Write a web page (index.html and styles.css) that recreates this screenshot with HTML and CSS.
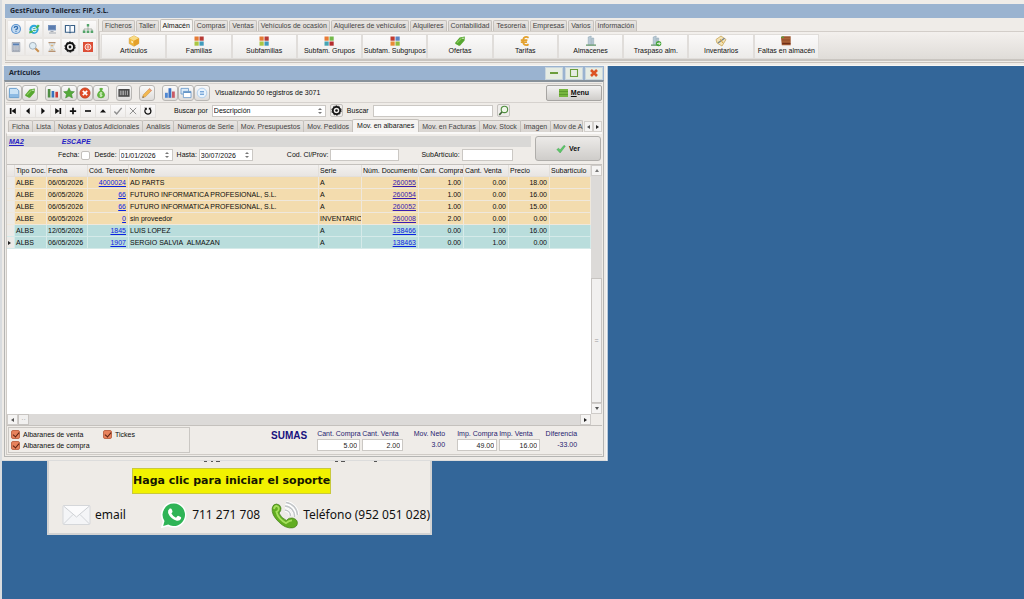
FILE: index.html
```html
<!DOCTYPE html>
<html lang="es">
<head>
<meta charset="utf-8">
<title>GestFuturo Talleres: FIP, S.L.</title>
<link rel="stylesheet" href="styles.css">
</head>
<body>
<svg class="sprite" aria-hidden="true">
  <symbol id="i-help" viewBox="0 0 12 12"><circle cx="6" cy="6" r="5" fill="#5b93cf"/><circle cx="6" cy="6" r="3.9" fill="#c3daf0"/><path d="M4.4 5Q4.4 3.4 6 3.4T7.6 4.9Q7.6 5.7 6 6.6V7.2M6 8.2V9" stroke="#3470b4" stroke-width="1.3" fill="none"/></symbol>
  <symbol id="i-globe" viewBox="0 0 12 12"><circle cx="6" cy="6.3" r="4.6" fill="#2fa8dc"/><path d="M1.2 9.5Q6 9 10.8 2.2" stroke="#49b655" stroke-width="2.2" fill="none"/><path d="M4 6.4H8.6M8.3 8Q6 10 4.3 7.5T6 4.2Q8 4.2 8.3 6" stroke="#e8f6fb" stroke-width="1" fill="none"/></symbol>
  <symbol id="i-pc" viewBox="0 0 12 12"><path d="M2 2H10V7.4H2Z" fill="#7592bd"/><path d="M3 3H9V6.2H3Z" fill="#5c7db0"/><path d="M4.5 8H7.5V9H4.5ZM3 9.5H10V10.5H3Z" fill="#a4a9b2"/></symbol>
  <symbol id="i-book" viewBox="0 0 12 12"><path d="M1.4 2.5H5Q6 2.6 6 3.6Q6 2.6 7 2.5H10.6V9.3H7Q6 9.3 6 10.2Q6 9.3 5 9.3H1.4Z" fill="#f8fbff" stroke="#385f86" stroke-width="1.1"/><path d="M6 3.5V10" stroke="#385f86"/></symbol>
  <symbol id="i-tree" viewBox="0 0 12 12"><path d="M6 3V7M2 8V6H10V8" stroke="#8d9a8d" stroke-width=".7" fill="none"/><path d="M4.8 1H7.2V3.4H4.8ZM.8 7.6H3.4V10H.8ZM4.7 7.6H7.3V10H4.7ZM8.6 7.6H11.2V10H8.6Z" fill="#53a469"/></symbol>
  <symbol id="i-calc" viewBox="0 0 12 12"><path d="M2.2 1.5H9.8V10.6H2.2Z" fill="#cfd4dc" stroke="#8e95a3" stroke-width=".7"/><path d="M3 2.4H9V4.4H3Z" fill="#5980b5"/><path d="M3.2 6H9M3.2 8H9M3.2 9.6H9" stroke="#8790a0" stroke-width=".9" stroke-dasharray="1.4 .7"/></symbol>
  <symbol id="i-zoom" viewBox="0 0 12 12"><path d="M7 7L10.8 10.8" stroke="#c98f4e" stroke-width="2"/><circle cx="4.8" cy="4.8" r="3.4" fill="#ddebf3" stroke="#a3b0bb" stroke-width="1"/></symbol>
  <symbol id="i-sand" viewBox="0 0 12 12"><path d="M2.5 1H9.5V2.2H2.5ZM2.5 9.8H9.5V11H2.5Z" fill="#b98e68"/><path d="M3.3 2.2H8.7Q8.4 4.6 6.6 6Q8.4 7.4 8.7 9.8H3.3Q3.6 7.4 5.4 6Q3.6 4.6 3.3 2.2Z" fill="#e5edf1" stroke="#a9b0b5" stroke-width=".5"/><path d="M4.2 3.8H7.8L6 5.7ZM4 9.6L6 7.4L8 9.6Z" fill="#dbae72"/></symbol>
  <symbol id="i-gear" viewBox="0 0 12 12"><circle cx="6" cy="6" r="4" fill="none" stroke="#111" stroke-width="1.9"/><circle cx="6" cy="6" r="5.1" fill="none" stroke="#111" stroke-width="1" stroke-dasharray="1.8 1.4"/><circle cx="6" cy="6" r="1.4" fill="#111"/></symbol>
  <symbol id="i-power" viewBox="0 0 12 12"><path d="M1 1H11V11H1Z" fill="#dd4e36"/><circle cx="6" cy="6" r="3" fill="#e9705a" stroke="#fff" stroke-width=".8"/><path d="M6 4.5V7.5" stroke="#fff" stroke-width=".9"/></symbol>
  <symbol id="i-box" viewBox="0 0 12 12"><path d="M6 .8L10.8 3.2V8.6L6 11.3L1.2 8.6V3.2Z" fill="#efb73c" stroke="#c8922b" stroke-width=".5"/><path d="M6 .8L10.8 3.2L6 5.8L1.2 3.2Z" fill="#f8db86"/><path d="M6 5.8V11.3L10.8 8.6V3.2Z" fill="#e4a02b"/><path d="M3.3 5.5L5 6.4V8.3L3.3 7.4Z" fill="#fff3ca"/></symbol>
  <symbol id="i-tiles" viewBox="0 0 12 12"><path d="M1.5 1.5H5.7V5.7H1.5Z" fill="#e57b35"/><path d="M6.5 1.5H10.7V5.7H6.5Z" fill="#b73a35"/><path d="M1.5 6.5H5.7V10.7H1.5Z" fill="#a9c643"/><path d="M6.5 6.5H10.7V10.7H6.5Z" fill="#409bbd"/></symbol>
  <symbol id="i-tiles2" viewBox="0 0 12 12"><path d="M1.5 1.5H5.7V5.7H1.5Z" fill="#e87b35"/><path d="M6.5 1.5H10.7V5.7H6.5Z" fill="#75b94a"/><path d="M1.5 6.5H5.7V10.7H1.5Z" fill="#45a4b3"/><path d="M6.5 6.5H10.7V10.7H6.5Z" fill="#b52d2d"/></symbol>
  <symbol id="i-tiles3" viewBox="0 0 12 12"><path d="M1.5 1.5H5.7V5.7H1.5Z" fill="#c13a30"/><path d="M6.5 1.5H10.7V5.7H6.5Z" fill="#5e86c4"/><path d="M1.5 6.5H5.7V10.7H1.5Z" fill="#e98a36"/><path d="M6.5 6.5H10.7V10.7H6.5Z" fill="#8fbb3f"/></symbol>
  <symbol id="i-leaf" viewBox="0 0 12 12"><path d="M1.2 7.8L5.6 2.6L10.8 1.4L10.6 5.4L6.2 10.4Q5.2 11.2 4 10.2L1.6 8.9Q.8 8.4 1.2 7.8Z" fill="#57a730"/><path d="M3 7.8L7.6 3.2" stroke="#8bcb5e" stroke-width="1.2"/><circle cx="9" cy="3.2" r=".8" fill="#eef8e8"/></symbol>
  <symbol id="i-euro" viewBox="0 0 12 12"><path d="M9.6 2.8Q7 .9 4.8 3Q3.2 6 4.8 9Q7 11.2 9.6 9.2M1.8 5.1H8.4M1.8 7.2H8" stroke="#e3a12f" stroke-width="1.8" fill="none"/></symbol>
  <symbol id="i-wh" viewBox="0 0 12 12"><path d="M3.2 10V2L6.2 1V10ZM6.8 10V3H8.7V10Z" fill="#b9cad6" stroke="#8ba0ae" stroke-width=".5"/><path d="M1 9.4H11V10.9H1Z" fill="#78a47e"/></symbol>
  <symbol id="i-whgo" viewBox="0 0 12 12"><path d="M3.2 10V2L6.2 1V10ZM6.8 10V3H8.7V10Z" fill="#b9cad6" stroke="#8ba0ae" stroke-width=".5"/><path d="M1 9.4H8V10.9H1Z" fill="#78a47e"/><circle cx="8.6" cy="8.6" r="2.7" fill="#46a53a"/><path d="M7 8.6H10M8.8 7.2L10.2 8.6L8.8 10" stroke="#fff" stroke-width=".8" fill="none"/></symbol>
  <symbol id="i-inv" viewBox="0 0 12 12"><path d="M1 4.5L6 1L11 4.5L7 11L2 8Z" fill="#f3e3b5" stroke="#c7a55a" stroke-width=".8"/><path d="M3 8L9.5 3.2" stroke="#77828d" stroke-width="1.3"/><path d="M5 4L8 8" stroke="#dda73d"/></symbol>
  <symbol id="i-crate" viewBox="0 0 12 12"><path d="M1 2.2L2.4 1.2H10.7V10.2H1.8Z" fill="#9d5630"/><path d="M2 3H10V4H2ZM2.4 6.2H10V7H2.4Z" fill="#ab6439"/><path d="M1 2.2H4" stroke="#58a23c" stroke-width="1.2"/><path d="M2.2 8.5H10.4" stroke="#702e18"/></symbol>
  <symbol id="i-page" viewBox="0 0 12 12"><path d="M1.4 1.4H8.5L10.8 3.6V10.6H1.4Z" fill="#c9e2f5" stroke="#6b9fcd" stroke-width="1"/><path d="M2 7H10V10H2Z" fill="#8dbbe4"/></symbol>
  <symbol id="i-bars" viewBox="0 0 12 12"><path d="M.8 2H3.4V10.5H.8Z" fill="#4f8e43"/><path d="M4.6 4H7.2V10.5H4.6Z" fill="#3973bd"/><path d="M8.4 4.8H11V10.5H8.4Z" fill="#cc3c37"/></symbol>
  <symbol id="i-star" viewBox="0 0 12 12"><path d="M6 .8L7.6 4.3L11.4 4.7L8.6 7.2L9.4 11L6 9.1L2.6 11L3.4 7.2L.6 4.7L4.4 4.3Z" fill="#55aa3a" stroke="#39842b" stroke-width=".5"/></symbol>
  <symbol id="i-x" viewBox="0 0 12 12"><circle cx="6" cy="6" r="5.2" fill="#df4b26" stroke="#a83c22" stroke-width=".5"/><path d="M3.8 3.8L8.2 8.2M8.2 3.8L3.8 8.2" stroke="#fff" stroke-width="1.7"/></symbol>
  <symbol id="i-bag" viewBox="0 0 12 12"><path d="M5 3.5L4.3 1.5L6 .7L8.2 1.6L7 3.5Q10.6 6 9.8 9Q8.8 11.4 6 11.3Q3 11.3 2.2 9Q1.6 6 5 3.5Z" fill="#62b342"/><path d="M6 5V10M7.3 6Q4.7 5.3 4.8 6.8T7.2 8.2Q7 9.6 4.7 9" stroke="#e8f7db" stroke-width=".8" fill="none"/></symbol>
  <symbol id="i-barcode" viewBox="0 0 12 12"><path d="M.4 2H11.6V9.8H.4Z" fill="#4a4a4a"/><path d="M2.3 3.6V8.2M4 3.6V8.2M5.4 3.6V8.2M7.3 3.6V8.2M9.4 3.6V8.2" stroke="#d8d8d8" stroke-width=".7"/></symbol>
  <symbol id="i-pencil" viewBox="0 0 12 12"><path d="M1.5 10.7L2.3 7.8L8.5 1.4L10.7 3.4L4.4 9.8Z" fill="#f2b850" stroke="#c28a3a" stroke-width=".5"/><path d="M7.6 2.3L8.5 1.4L10.7 3.4L9.8 4.4Z" fill="#e79084"/><path d="M1.5 10.7L1.9 9.2L3 10.2Z" fill="#444"/></symbol>
  <symbol id="i-chart" viewBox="0 0 12 12"><path d="M1 5.8H3.8V10.8H1Z" fill="#4e87d2"/><path d="M4.5 1.2H7.3V10.8H4.5Z" fill="#3e74c4"/><path d="M8 4.5H10.8V10.8H8Z" fill="#c95b66"/></symbol>
  <symbol id="i-wins" viewBox="0 0 12 12"><path d="M1 1.4H8.5V7H1Z" fill="#dcebf8" stroke="#6596c8" stroke-width=".8"/><path d="M3.4 4.4H11V10.6H3.4Z" fill="#fff" stroke="#6596c8" stroke-width=".8"/><path d="M3.4 4.4H11V6H3.4Z" fill="#6596c8"/></symbol>
  <symbol id="i-doc" viewBox="0 0 12 12"><circle cx="6" cy="6" r="4.8" fill="#e8f3fd" stroke="#a6c8e9" stroke-width=".8"/><path d="M4 4.8H8M4 7.2H8" stroke="#4a88ca" stroke-width="1"/></symbol>
  <symbol id="i-find" viewBox="0 0 12 12"><path d="M4.6 7.4L1.4 10.8" stroke="#3c5f35" stroke-width="1.7"/><circle cx="7" cy="4.8" r="3.5" fill="#eff6e9" stroke="#4f8d3e" stroke-width="1.2"/></symbol>
  <symbol id="n-first" viewBox="0 0 12 12"><path d="M2.2 2.4V9.6H4.2V2.4ZM9.4 2.4V9.6L4.3 6Z" fill="#111"/></symbol>
  <symbol id="n-prev" viewBox="0 0 12 12"><path d="M8 2.2V9.8L3.6 6Z" fill="#111"/></symbol>
  <symbol id="n-next" viewBox="0 0 12 12"><path d="M4 2.2V9.8L8.4 6Z" fill="#111"/></symbol>
  <symbol id="n-last" viewBox="0 0 12 12"><path d="M9.8 2.4V9.6H7.8V2.4ZM2.6 2.4V9.6L7.7 6Z" fill="#111"/></symbol>
  <symbol id="n-plus" viewBox="0 0 12 12"><path d="M6 2.2V9.8M2.2 6H9.8" stroke="#111" stroke-width="2.1"/></symbol>
  <symbol id="n-minus" viewBox="0 0 12 12"><path d="M2.4 6H9.6" stroke="#111" stroke-width="2"/></symbol>
  <symbol id="n-up" viewBox="0 0 12 12"><path d="M2.4 7.8H9.6L6 4Z" fill="#111"/></symbol>
  <symbol id="n-ok" viewBox="0 0 12 12"><path d="M1.6 6.6L4.4 9.4L10.4 2.2" stroke="#8f8f8f" stroke-width="1.7" fill="none"/></symbol>
  <symbol id="n-no" viewBox="0 0 12 12"><path d="M2.2 2.2L9.8 9.8M9.8 2.2L2.2 9.8" stroke="#8f8f8f" stroke-width="1.2"/></symbol>
  <symbol id="n-re" viewBox="0 0 12 12"><path d="M3.4 3Q1 6 3.4 8.8Q6 10.8 8.6 8.8Q10.8 6 8 3" stroke="#111" stroke-width="1.4" fill="none"/><path d="M1.4 2H4.6V5Z M10.2 2H7V4.6Z" fill="#111"/></symbol>
  <symbol id="i-check" viewBox="0 0 12 12"><path d="M1 6.6L3.2 5L4.8 7.2L9.6 1.6L11.2 2.6L5 10.8Z" fill="#5dc768" stroke="#379c48" stroke-width=".5"/></symbol>
</svg>

<header class="app">
  <h1 class="app-title">GestFuturo Talleres: FIP, S.L.</h1>
  <div class="ribbon">
    <div class="quick">
      <button aria-label="Ayuda"><svg><use href="#i-help"/></svg></button>
      <button aria-label="Web"><svg><use href="#i-globe"/></svg></button>
      <button aria-label="Equipo"><svg><use href="#i-pc"/></svg></button>
      <button aria-label="Manual"><svg><use href="#i-book"/></svg></button>
      <button aria-label="Esquema"><svg><use href="#i-tree"/></svg></button>
      <button aria-label="Calculadora"><svg><use href="#i-calc"/></svg></button>
      <button aria-label="Buscar"><svg><use href="#i-zoom"/></svg></button>
      <button aria-label="Espera"><svg><use href="#i-sand"/></svg></button>
      <button aria-label="Configuración"><svg><use href="#i-gear"/></svg></button>
      <button aria-label="Salir"><svg><use href="#i-power"/></svg></button>
    </div>
    <div class="ribbon-main">
      <nav class="tabs app-tabs">
        <button>Ficheros</button><button>Taller</button><button class="on">Almacén</button><button>Compras</button><button>Ventas</button><button>Vehículos de ocasión</button><button>Alquileres de vehículos</button><button>Alquileres</button><button>Contabilidad</button><button>Tesorería</button><button>Empresas</button><button>Varios</button><button>Información</button>
      </nav>
      <div class="ribbon-body">
        <div class="tools">
          <button><svg><use href="#i-box"/></svg>Artículos</button>
          <button><svg><use href="#i-tiles"/></svg>Familias</button>
          <button><svg><use href="#i-tiles"/></svg>Subfamilias</button>
          <button><svg><use href="#i-tiles2"/></svg>Subfam. Grupos</button>
          <button><svg><use href="#i-tiles3"/></svg>Subfam. Subgrupos</button>
          <button><svg><use href="#i-leaf"/></svg>Ofertas</button>
          <button><svg><use href="#i-euro"/></svg>Tarifas</button>
          <button><svg><use href="#i-wh"/></svg>Almacenes</button>
          <button><svg><use href="#i-whgo"/></svg>Traspaso alm.</button>
          <button><svg><use href="#i-inv"/></svg>Inventarios</button>
          <button><svg><use href="#i-crate"/></svg>Faltas en almacén</button>
        </div>
      </div>
    </div>
  </div>
</header>

<main class="desktop">
  <section class="support">
    <svg class="rule" viewBox="0 0 180 2"><path d="M0 1.5H3M7 1.5H9M12 1.5H16M131 1.5H134M137 1.5H141M170 1.5H173" stroke="#555"/></svg>
    <button class="start">Haga clic para iniciar el soporte</button>
    <div class="contacts">
      <a class="mail" href="#email"><svg class="ico-mail" viewBox="0 0 28 20"><rect x=".5" y=".5" width="27" height="19" rx="1" fill="#f4f5f7" stroke="#d5d7da"/><path d="M1 19L10.5 9.5M27 19L17.5 9.5" stroke="#d2d5d9" fill="none"/><path d="M1 1L14 12L27 1" fill="#fbfbfc" stroke="#cdd0d4"/></svg>email</a>
      <a class="wa" href="#whatsapp"><svg class="ico-wa" viewBox="0 0 28 28"><path d="M14 1A12.8 12.8 0 1 1 8 25.3L.8 27.3L2.8 20.4A12.8 12.8 0 0 1 14 1Z" fill="#fff"/><path d="M14 2.6A11.2 11.2 0 1 1 8.2 23.5L3.2 24.9L4.5 20A11.2 11.2 0 0 1 14 2.6Z" fill="#2fb456"/><path d="M9.8 7.6Q11.2 7 11.7 8.3L12.5 10.3Q12.8 11 11.4 12.4Q13.2 15.6 16 16.7L17.5 15Q18 14.6 18.6 14.9L20.8 16Q21.4 16.4 21 17.7Q19.8 20.3 16.7 19.7Q10.4 17.8 8.1 12Q7.4 9.2 9.8 7.6Z" fill="#fff"/></svg>711 271 708</a>
      <a class="tel" href="#telefono"><svg class="ico-tel" viewBox="0 0 28 28"><path d="M14 9A6 6 0 0 1 19.5 15M14 5A10 10 0 0 1 23.5 16M15 1.5A13 13 0 0 1 26.5 14" fill="none" stroke="#fff" stroke-width="3.4"/><path d="M14 9A6 6 0 0 1 19.5 15M14 5A10 10 0 0 1 23.5 16M15 1.5A13 13 0 0 1 26.5 14" fill="none" stroke="#c3c6c8" stroke-width="1.6"/><path d="M1.2 7Q2 3 5.5 3Q9.4 3.4 10 7Q10.2 10.4 8 12Q10 17 15.4 19.4Q17.6 16.4 21.4 17Q26 18 26.4 21.6Q26.4 25.8 22 26.8Q14.6 28 7.6 20.8Q.3 14 1.2 7Z" fill="#62ad21" stroke="#417d14" stroke-width=".7"/><path d="M3 8Q3.6 5 5.6 5Q7.8 5.6 7.8 8Q7.6 10 5.4 10.8Q7.2 18 15 22.2Q18 19.4 21 19.4" fill="none" stroke="#a6df5d" stroke-width="1.8"/></svg>Teléfono (952 051 028)</a>
    </div>
  </section>

  <section class="win">
    <div class="win-title"><h2>Artículos</h2>
      <button aria-label="Minimizar"><svg viewBox="0 0 12 10"><path d="M2 5H10" stroke="#6b9d3c" stroke-width="2"/></svg></button>
      <button aria-label="Maximizar"><svg viewBox="0 0 12 10"><path d="M2.5 1.5H9.5V8.5H2.5Z" fill="none" stroke="#6b9d3c" stroke-width="1.1"/></svg></button>
      <button aria-label="Cerrar"><svg viewBox="0 0 12 10"><path d="M3 2L9 8M9 2L3 8" stroke="#dc5424" stroke-width="2.6"/></svg></button>
    </div>
    <div class="win-body">
      <div class="bar">
        <div class="grp"><button aria-label="Ficha nueva"><svg><use href="#i-page"/></svg></button><button aria-label="Etiqueta"><svg><use href="#i-leaf"/></svg></button></div>
        <div class="grp"><button aria-label="Estadística"><svg><use href="#i-bars"/></svg></button><button aria-label="Favorito"><svg><use href="#i-star"/></svg></button><button aria-label="Anular"><svg><use href="#i-x"/></svg></button><button aria-label="Precios"><svg><use href="#i-bag"/></svg></button></div>
        <div class="grp"><button aria-label="Código de barras"><svg><use href="#i-barcode"/></svg></button></div>
        <div class="grp"><button aria-label="Editar"><svg><use href="#i-pencil"/></svg></button></div>
        <div class="grp"><button aria-label="Gráfico"><svg><use href="#i-chart"/></svg></button><button aria-label="Ventanas"><svg><use href="#i-wins"/></svg></button><button aria-label="Notas"><svg><use href="#i-doc"/></svg></button></div>
        <span class="status">Visualizando 50 registros de 3071</span>
        <button class="menu"><i></i><span><u>M</u>enu</span></button>
      </div>
      <div class="nav">
        <div class="steps">
          <button aria-label="Primero"><svg><use href="#n-first"/></svg></button><button aria-label="Anterior"><svg><use href="#n-prev"/></svg></button><button aria-label="Siguiente"><svg><use href="#n-next"/></svg></button><button aria-label="Último"><svg><use href="#n-last"/></svg></button><button aria-label="Añadir"><svg><use href="#n-plus"/></svg></button><button aria-label="Quitar"><svg><use href="#n-minus"/></svg></button><button aria-label="Modificar"><svg><use href="#n-up"/></svg></button><button aria-label="Aceptar"><svg><use href="#n-ok"/></svg></button><button aria-label="Cancelar"><svg><use href="#n-no"/></svg></button><button aria-label="Refrescar"><svg><use href="#n-re"/></svg></button>
        </div>
        <label for="by">Buscar por</label>
        <span class="spin combo"><select id="by"><option>Descripción</option></select></span>
        <button class="sq" aria-label="Opciones"><svg><use href="#i-gear"/></svg></button>
        <label for="q">Buscar</label>
        <input id="q" class="query" type="text">
        <button class="sq" aria-label="Buscar artículo"><svg><use href="#i-find"/></svg></button>
      </div>
      <div class="tabrow">
        <nav class="tabs">
          <button>Ficha</button><button>Lista</button><button>Notas y Datos Adicionales</button><button>Análisis</button><button>Números de Serie</button><button>Mov. Presupuestos</button><button>Mov. Pedidos</button><button class="on">Mov. en albaranes</button><button>Mov. en Facturas</button><button>Mov. Stock</button><button>Imagen</button><button class="last">Mov de A</button>
        </nav>
        <button class="arrow" aria-label="Pestañas anteriores"><i class="tri left"></i></button><button class="arrow" aria-label="Pestañas siguientes"><i class="tri right"></i></button>
      </div>
      <div class="panel">
        <div class="filter">
          <div class="filter-main">
            <div class="article"><a href="#ma2">MA2</a><strong>ESCAPE</strong></div>
            <div class="fields">
              <label for="fe">Fecha:</label><input id="fe" class="tick blank" type="checkbox">
              <label for="de">Desde:</label><span class="spin date"><input id="de" type="text" value="01/01/2026"></span>
              <label class="until" for="ha">Hasta:</label><span class="spin date"><input id="ha" type="text" value="30/07/2026"></span>
              <label class="far" for="cp">Cod. Cl/Prov:</label><input id="cp" class="prov" type="text">
              <label class="sub" for="sa">SubArtículo:</label><input id="sa" class="subart" type="text">
            </div>
          </div>
          <button class="ver"><svg><use href="#i-check"/></svg>Ver</button>
        </div>
        <div class="grid">
          <div class="sheet">
            <table>
              <colgroup><col class="c-ind"><col class="c-tipo"><col class="c-fecha"><col class="c-cod"><col><col class="c-serie"><col class="c-doc"><col class="c-cant"><col class="c-cant"><col class="c-pre"><col class="c-pre"></colgroup>
              <thead><tr><th></th><th>Tipo Doc.</th><th>Fecha</th><th>Cód. Tercero</th><th>Nombre</th><th>Serie</th><th>Núm. Documento</th><th>Cant. Compra</th><th>Cant. Venta</th><th>Precio</th><th>Subartículo</th></tr></thead>
              <tbody>
                <tr class="buy"><td></td><td>ALBE</td><td>06/05/2026</td><td class="n"><a href="#t">4000024</a></td><td>AD PARTS</td><td>A</td><td class="n v"><a href="#d">260055</a></td><td class="n">1.00</td><td class="n">0.00</td><td class="n">18.00</td><td></td></tr>
                <tr class="buy"><td></td><td>ALBE</td><td>06/05/2026</td><td class="n"><a href="#t">66</a></td><td>FUTURO INFORMATICA PROFESIONAL, S.L.</td><td>A</td><td class="n v"><a href="#d">260054</a></td><td class="n">1.00</td><td class="n">0.00</td><td class="n">16.00</td><td></td></tr>
                <tr class="buy"><td></td><td>ALBE</td><td>06/05/2026</td><td class="n"><a href="#t">66</a></td><td>FUTURO INFORMATICA PROFESIONAL, S.L.</td><td>A</td><td class="n v"><a href="#d">260052</a></td><td class="n">1.00</td><td class="n">0.00</td><td class="n">15.00</td><td></td></tr>
                <tr class="buy"><td></td><td>ALBE</td><td>06/05/2026</td><td class="n"><a href="#t">0</a></td><td>sin proveedor</td><td>INVENTARIO</td><td class="n v"><a href="#d">260008</a></td><td class="n">2.00</td><td class="n">0.00</td><td class="n">0.00</td><td></td></tr>
                <tr class="sell"><td></td><td>ALBS</td><td>12/05/2026</td><td class="n"><a href="#t">1845</a></td><td>LUIS LOPEZ</td><td>A</td><td class="n"><a href="#d">138466</a></td><td class="n">0.00</td><td class="n">1.00</td><td class="n">16.00</td><td></td></tr>
                <tr class="sell"><td><i class="tri right"></i></td><td>ALBS</td><td>06/05/2026</td><td class="n"><a href="#t">1907</a></td><td>SERGIO SALVIA&nbsp; ALMAZAN</td><td>A</td><td class="n"><a href="#d">138463</a></td><td class="n">0.00</td><td class="n">1.00</td><td class="n">0.00</td><td></td></tr>
              </tbody>
            </table>
          </div>
          <div class="vbar"><button aria-label="Subir"><i class="tri up"></i></button><span class="gap"></span><span class="thumb">=</span><button aria-label="Bajar"><i class="tri down"></i></button></div>
          <div class="hbar"><button aria-label="Izquierda"><i class="tri left"></i></button><span class="thumb">··</span><span class="gap"></span><button aria-label="Derecha"><i class="tri right"></i></button></div>
        </div>
        <div class="foot">
          <div class="opts">
            <label><input class="tick" type="checkbox" checked>Albaranes de venta</label>
            <label><input class="tick" type="checkbox" checked>Tickes</label>
            <label><input class="tick" type="checkbox" checked>Albaranes de compra</label>
          </div>
          <strong class="sumas">SUMAS</strong>
          <div class="sums">
            <label>Cant. Compra<input type="text" value="5.00"></label>
            <label>Cant. Venta<input type="text" value="2.00"></label>
            <div class="net">Mov. Neto<output>3.00</output></div>
            <label>Imp. Compra<input type="text" value="49.00"></label>
            <label>Imp. Venta<input type="text" value="16.00"></label>
            <div>Diferencia<output>-33.00</output></div>
          </div>
        </div>
      </div>
    </div>
  </section>
</main>
</body>
</html>
```
FILE: styles.css
```css
* { box-sizing: border-box; }
html { height: 100%; }
body {
  margin: 0;
  min-height: 100%;
  display: flex;
  flex-direction: column;
  overflow: hidden;
  border-left: 2px solid #d9dcdf;
  background: #336699;
  color: #0c0c0c;
  font: 7px/10px "Liberation Sans", Arial, sans-serif;
}
button, input, select { font: inherit; color: inherit; margin: 0; padding: 0; }
button { display: flex; align-items: center; justify-content: center; border: 0; background: none; white-space: nowrap; }
h1, h2 { margin: 0; font: bold 7px/14px "Open Sans", "Noto Sans", sans-serif; color: #1b2430; }
label { white-space: nowrap; }
svg { width: 12px; height: 12px; flex: none; display: block; }
.sprite { position: absolute; width: 0; height: 0; }
input[type="text"], select {
  height: 12px;
  border: 1px solid #cbc8c4;
  background: #fff;
  appearance: none;
  border-radius: 0;
  padding: 0 2px;
  min-width: 0;
}

.tri { display: block; width: 0; height: 0; border: 2px solid transparent; }
.tri.left { border-right: 3px solid #555; border-left: 0; }
.tri.right { border-left: 3px solid #222; border-right: 0; }
.tri.up { border-bottom: 3px solid #777; border-top: 0; }
.tri.down { border-top: 3px solid #555; border-bottom: 0; }

/* Main bar */
.app { height: 66px; padding: 4px 0 0 3px; background: #efece8; display: flex; flex-direction: column; border-bottom: 1px solid #f7f6f4; }
.app-title { height: 14px; padding-left: 5px; background: #9ab3d0; }
.ribbon { flex: 1; display: flex; padding-top: 1px; margin-bottom: 2px; border-bottom: 1px solid #c9c3bd; }
.quick { display: grid; grid-template-columns: repeat(5, 18px); grid-template-rows: repeat(2, 18px); padding: 1px; height: 42px; border: 1px solid #cfcbc6; border-top: 0; }
.quick button { background: linear-gradient(#fbfafa, #eceae8); border: 1px solid #e9e6e3; }
.ribbon-main { flex: 1; min-width: 0; }
.tabs { display: flex; align-items: flex-end; height: 12px; gap: 1px; overflow: hidden; }
.tabs button { height: 11px; padding: 0 2px; border: 1px solid #c5c1bc; border-bottom: 0; border-radius: 2px 2px 0 0; background: linear-gradient(#e9e6e3, #d9d5d1); color: #444; flex: none; }
.tabs .on { height: 12px; background: #f6f4f2; color: #111; }
.app-tabs { padding-left: 3px; }
.ribbon-body { height: 30px; padding: 2px 0 0 1px; border-top: 1px solid #d3cec9; border-bottom: 2px solid #c9c5c0; border-left: 1px solid #d3cec9; background: linear-gradient(#f3f0ed, #dfdcd8); }
.tools { display: grid; grid-template-columns: repeat(11, 1fr); max-width: 718px; height: 25px; }
.tools button { flex-direction: column; justify-content: flex-start; line-height: 8px; border: 1px solid #e0ddda; background: linear-gradient(#fbfafa, #ecebe9); color: #111; }

/* Desktop */
.desktop { flex: 1; position: relative; }

.support { position: absolute; left: 45px; top: 300px; width: 385px; padding: 92px 0 4px; background: #eeebe7; border: 2px solid #d3d3d3; }
.rule { width: 180px; height: 2px; margin: 0 0 6px 155px; }
.start { margin: 0 auto 0 83px; height: 26px; padding: 0; border: 1px solid #c9c93c; background: #f2f200; color: #161600; font: bold 11px/14px "DejaVu Sans", sans-serif; }
.contacts { display: flex; align-items: center; padding: 7px 0 0 13px; font: 12px/28px "Noto Sans", sans-serif; }
.contacts a { display: flex; align-items: center; gap: 4px; color: #111; text-decoration: none; white-space: nowrap; }
.mail { width: 99px; }
.wa { width: 112px; }
.ico-mail { width: 29px; height: 20px; }
.ico-wa, .ico-tel { width: 28px; height: 28px; }

.win { position: absolute; left: 0; top: 0; width: 605px; padding: 0 2px 3px; background: #eeebe7; border-right: 1px solid #f6f6f6; border-bottom: 1px solid #dcdcdc; box-shadow: 1px 0 0 #b9c9d9; }
.win-title { display: flex; align-items: center; gap: 2px; height: 14px; padding: 0 1px 0 5px; background: #9ab3d0; }
.win-title h2 { flex: 1; }
.win-title button { width: 18px; height: 13px; background: #e6ece3; border: 1px solid #c9d5dd; }
.win-title svg { height: 10px; }
.win-body { border: 1px solid #b5b5b3; border-top: 2px solid #87919a; padding: 1px 1px 1px 1px; background: #efece8; }

.bar { display: flex; align-items: center; gap: 7px; height: 20px; border: 1px solid #d6d2ce; border-width: 1px 0; }
.grp { display: flex; }
.grp button { width: 16px; height: 16px; border: 1px solid #b9b7b4; border-radius: 3px; background: linear-gradient(#fafafa, #dedcda); }
.bar .status { flex: 1; margin-left: -2px; }
.menu { width: 56px; height: 16px; gap: 3px; border: 1px solid #a7a5a2; border-radius: 2px; background: linear-gradient(#f4f3f2, #cfcdca); font-weight: bold; }
.menu i { width: 9px; height: 8px; background: repeating-linear-gradient(#77b53f 0 2px, #5d9a2e 2px 3px); }

.nav { display: flex; align-items: center; gap: 4px; height: 15px; }
.steps { display: flex; margin-right: 14px; }
.steps button { width: 15px; height: 14px; border: 1px solid #e4e1de; border-left: 0; background: linear-gradient(#fbfafa, #efedeb); }
.steps svg { width: 10px; height: 10px; }
.spin { display: flex; position: relative; }
.spin::before, .spin::after { content: ""; position: absolute; right: 4px; border: 2px solid transparent; }
.spin::before { top: 3px; border-bottom: 2px solid #777; border-top: 0; }
.spin::after { bottom: 3px; border-top: 2px solid #777; border-bottom: 0; }
.combo { width: 114px; }
.combo select { width: 100%; padding: 0 1px; }
.sq { width: 13px; height: 13px; border: 1px solid #c5c2be; border-radius: 2px; background: #efedeb; }
.sq svg { width: 11px; height: 11px; }
.query { width: 120px; }

.tabrow { display: flex; align-items: flex-end; height: 14px; }
.tabrow .tabs { flex: 1; min-width: 0; gap: 0; height: 13px; padding-left: 2px; }
.tabrow .tabs button { height: 12px; padding: 0 3px; margin-right: -1px; }
.tabrow .tabs .on { height: 13px; padding: 0 4px; }
.tabrow .tabs .last { padding: 0 0 0 2px; }
.arrow { width: 9px; height: 11px; border: 1px solid #d3d0cc; background: #f4f3f2; flex: none; }
.panel { border: 1px solid #cfcbc6; border-top: 2px solid #faf9f8; border-right: 0; padding-top: 2px; }

.filter { display: flex; gap: 4px; height: 28px; padding-right: 1px; }
.filter-main { flex: 1; min-width: 0; }
.article { display: flex; gap: 38px; height: 11px; padding-left: 2px; background: #d9d8d6; color: #2722c4; font: italic bold 7px/11px "Liberation Sans", Arial, sans-serif; }
.article a { color: inherit; }
.fields { display: flex; align-items: center; gap: 2px; height: 16px; padding-left: 51px; }
.date { width: 54px; }
.date input { width: 100%; padding: 0 1px; }
.until { margin-left: 2px; }
.far { margin-left: 32px; }
.sub { margin-left: 20px; }
.prov { width: 69px; }
.subart { width: 51px; margin-right: auto; }
.ver { width: 66px; height: 25px; gap: 3px; border: 1px solid #b0aeab; border-radius: 3px; background: linear-gradient(#eceae8, #cfcdca); font-weight: bold; }
.ver svg { width: 10px; height: 10px; }

.tick { appearance: none; flex: none; width: 9px; height: 9px; margin: 0; border: 1px solid #c06a4c; border-radius: 2px; background: #e8825c; position: relative; }
.tick:checked::after { content: ""; position: absolute; left: 2px; top: 0; width: 3px; height: 5px; border: solid #5b2313; border-width: 0 1px 1px 0; transform: rotate(40deg); }
.tick.blank { background: #fff; border-color: #c3c0bc; margin-right: 2px; }

.grid { display: grid; grid-template-columns: 1fr 11px; grid-template-rows: 249px 11px; border: 1px solid #c4c1bd; border-width: 1px 0; }
.sheet { background: #fff; overflow: hidden; }
table { width: 100%; table-layout: fixed; border-collapse: separate; border-spacing: 0; }
th, td { height: 12px; padding: 0 1px; line-height: 11px; white-space: nowrap; overflow: hidden; border-bottom: 1px solid #efe8dc; border-right: 1px solid #efe8dc; font-weight: normal; text-align: left; }
th { background: linear-gradient(#f3f1ef, #e8e5e2); border-color: #e2dfdb; }
td { padding: 0 0 0 1px; }
td.n { padding-right: 2px; }
td:first-child { background: #eceae7; }
.buy { background: #f3dcae; }
.sell { background: #b9dddc; }
.sell td { border-color: #d5eae9; }
.n { text-align: right; }
td a { color: #0a22e0; }
.v a { color: #3a1cb0; }
.c-ind { width: 8px; }
.c-tipo { width: 32px; }
.c-fecha { width: 41px; }
.c-cod { width: 41px; }
.c-serie { width: 43px; }
.c-doc { width: 57px; }
.c-cant { width: 45px; }
.c-pre { width: 41px; }
.gap { flex: 1; background: #dcdad8; }
.thumb { display: flex; align-items: center; justify-content: center; border: 1px solid #c7c4c1; background: #f1f0ef; color: #999; }
.vbar { display: flex; flex-direction: column; }
.vbar button, .hbar button { width: 11px; height: 11px; border: 1px solid #cfccc9; background: #f5f4f3; }
.vbar .thumb { flex: 1; }
.vbar .gap { flex: none; height: 41%; }
.hbar { display: flex; }
.hbar .thumb { width: 11px; }

.foot { display: flex; align-items: center; height: 28px; padding-left: 1px; }
.opts { display: grid; grid-template-columns: 92px 1fr; width: 182px; height: 26px; padding: 1px 2px; border: 1px solid #cac7c3; align-items: center; }
.opts label { display: flex; align-items: center; gap: 3px; }
.sumas { margin: 0 10px 8px 81px; color: #17127e; font-size: 10px; }
.sums { display: grid; grid-template-columns: 45px 43px 52px 42px 43px 42px; color: #25226f; }
.sums label, .sums div { display: flex; flex-direction: column; padding-right: 2px; }
.sums input { width: 100%; text-align: right; color: #222; }
.sums div { align-items: flex-end; padding-right: 7px; }
.sums .net { padding-right: 12px; }
.sums output { line-height: 12px; }
```
